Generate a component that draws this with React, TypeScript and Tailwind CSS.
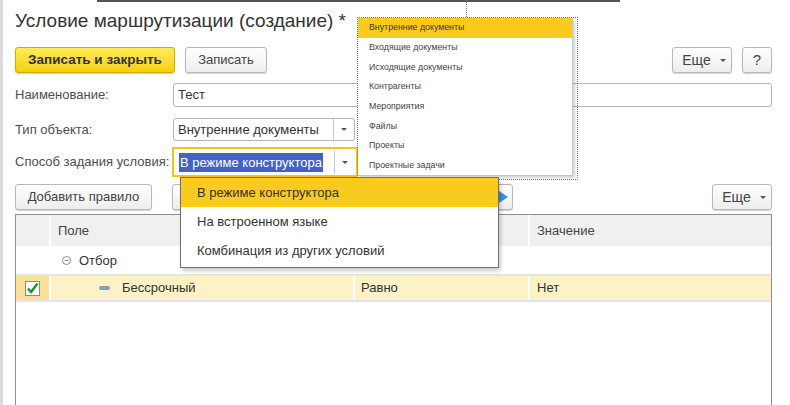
const Caret = () => (
  <span className="inline-block w-0 h-0 border-l-[3px] border-r-[3px] border-t-[3px] border-l-transparent border-r-transparent border-t-[#555]" />
);

type BtnProps = { children?: React.ReactNode; className?: string };

const Btn = ({ children, className = '' }: BtnProps) => (
  <div
    className={`flex items-center justify-center rounded-[3px] border border-[#b8b8b8] bg-linear-to-b from-white to-[#ededed] shadow-[0_1px_1px_rgba(0,0,0,0.18)] text-[13px] text-[#444] ${className}`.trim()}
  >
    {children}
  </div>
);

const objectTypes = [
  'Внутренние документы',
  'Входящие документы',
  'Исходящие документы',
  'Контрагенты',
  'Мероприятия',
  'Файлы',
  'Проекты',
  'Проектные задачи',
];

const modes = ['В режиме конструктора', 'На встроенном языке', 'Комбинация из других условий'];

export default function App() {
  return (
    <div className="relative w-[790px] h-[405px] overflow-hidden bg-white flex [font-family:'Liberation_Sans',Arial,sans-serif]">
      {/* left window edge */}
      <div className="w-[3px] h-full bg-[#dadada] shrink-0" />

      <div className="flex-1 flex flex-col pl-[12px] pr-[18px]">
        {/* Title */}
        <h1 className="mt-[9px] text-[19px] leading-[24px] text-[#333] font-normal">
          Условие маршрутизации (создание) *
        </h1>

        {/* Command bar */}
        <div className="mt-[14px] flex items-center h-[26px]">
          <div className="flex items-center justify-center w-[160px] h-[26px] rounded-[3px] border border-[#cfae00] bg-linear-to-b from-[#ffec55] to-[#f4cf00] shadow-[0_1px_1px_rgba(0,0,0,0.2)] text-[13.5px] font-bold text-[#333]">
            Записать и закрыть
          </div>
          <Btn className="ml-[10px] w-[82px] h-[26px]">Записать</Btn>
          <Btn className="ml-auto w-[60px] h-[26px] gap-[9px] pl-[4px] text-[14px]">
            Еще <Caret />
          </Btn>
          <Btn className="ml-[10px] w-[30px] h-[26px] text-[15px] text-[#333]">?</Btn>
        </div>

        {/* Наименование */}
        <div className="mt-[10px] flex items-center h-[24px] text-[13px]">
          <div className="w-[158px] text-[#4d4d4d] whitespace-nowrap">Наименование:</div>
          <div className="flex-1 h-[24px] rounded-[3px] border border-[#b5b5b5] flex items-center px-[4px] text-[#333]">
            Тест
          </div>
        </div>

        {/* Тип объекта */}
        <div className="mt-[11px] flex items-center h-[23px] text-[13px]">
          <div className="w-[158px] text-[#4d4d4d] whitespace-nowrap">Тип объекта:</div>
          <div className="w-[182px] h-[23px] rounded-[3px] border border-[#b5b5b5] flex items-center text-[#333]">
            <div className="flex-1 px-[4px] whitespace-nowrap">Внутренние документы</div>
            <div className="w-[21px] h-full border-l border-[#c8c8c8] flex items-center justify-center">
              <Caret />
            </div>
          </div>
        </div>

        {/* Способ задания условия */}
        <div className="mt-[6px] flex items-center h-[30px] text-[13px]">
          <div className="w-[157px] text-[#4d4d4d] whitespace-nowrap">Способ задания условия:</div>
          <div className="w-[186px] h-[30px] border-2 border-[#f5c21b] flex items-center p-[1px]">
            <div className="flex-1 h-full flex items-center pl-[4px] whitespace-nowrap">
              <span className="bg-[#4461c6] text-white leading-[19px] px-[1px]">В режиме конструктора</span>
            </div>
            <div className="w-[21px] h-full border-l border-[#c8c8c8] flex items-center justify-center">
              <Caret />
            </div>
          </div>
        </div>

        {/* Table command bar */}
        <div className="mt-[7px] flex items-center h-[26px]">
          <Btn className="w-[137px] h-[26px]">Добавить правило</Btn>
          <Btn className="ml-[20px] w-[341px] h-[26px] justify-end pr-[3px]">
            <svg width="12" height="14" viewBox="0 0 12 14">
              <path d="M2 1 L11 7 L2 13 Z" fill="#3d8fd6" />
            </svg>
          </Btn>
          <Btn className="ml-auto w-[60px] h-[26px] gap-[9px] pl-[4px] text-[14px]">
            Еще <Caret />
          </Btn>
        </div>

        {/* Table */}
        <div className="mt-[4px] flex-1 border border-b-0 border-[#8f8f8f] bg-white text-[13px] text-[#333]">
          <div className="grid grid-cols-[33px_302px_173px_1fr] gap-x-[2px] h-[31px]">
            <div className="bg-[#f0f0f0]" />
            <div className="bg-[#f0f0f0] flex items-center pl-[7px] text-[#444]">Поле</div>
            <div className="bg-[#f0f0f0] flex items-center pl-[7px] text-[#444]">Вид сравнения</div>
            <div className="bg-[#f0f0f0] flex items-center pl-[7px] text-[#444]">Значение</div>
          </div>

          <div className="mt-[1px] h-[29px] flex items-center border-b-2 border-[#e4e4e4]">
            <div className="w-[46px]" />
            <svg width="9" height="9" viewBox="0 0 9 9" className="mr-[8px]">
              <circle cx="4.5" cy="4.5" r="4" fill="none" stroke="#8a8a8a" />
              <path d="M2.5 4.5 H6.5" stroke="#8a8a8a" />
            </svg>
            <span>Отбор</span>
          </div>

          <div className="grid grid-cols-[33px_302px_173px_1fr] gap-x-[2px] h-[26px] border-b-2 border-[#e4e4e4]">
            <div className="bg-[#fbe197] flex items-center pl-[9px]">
              <div className="w-[15px] h-[15px] border border-[#8a8a8a] bg-white flex items-center justify-center">
                <svg width="13" height="13" viewBox="0 0 13 13">
                  <path d="M2 6.5 L5 10 L11.5 1.5" fill="none" stroke="#15953a" strokeWidth="2.4" />
                </svg>
              </div>
            </div>
            <div className="bg-[#fdf1c6] flex items-center pl-[48px]">
              <div className="w-[11px] h-[4px] rounded-[2px] bg-[#7f9fc2] mr-[12px]" />
              <span>Бессрочный</span>
            </div>
            <div className="bg-[#fdf1c6] flex items-center pl-[6px]">Равно</div>
            <div className="bg-[#fdf1c6] flex items-center pl-[7px]">Нет</div>
          </div>
        </div>
      </div>

      {/* window frame artifacts */}
      <div className="absolute left-[97px] top-0 w-[523px] h-[2px] bg-[#555]" />
      <div className="absolute left-[466px] top-0 h-[17px] border-l border-dotted border-[#777]" />

      {/* Object type list popup */}
      <div className="absolute left-[357px] top-[17px] w-[221px] h-[163px] border border-dotted border-[#777]">
        <div className="w-[215px] h-[158px] bg-white border-r border-b border-[#c4c4c4] shadow-[2px_2px_3px_rgba(0,0,0,0.18)] text-[8.8px] text-[#444]">
          {objectTypes.map((t, i) => (
            <div
              key={t}
              className={`h-[19.7px] flex items-center pl-[11px] ${i === 0 ? 'bg-[#f9cb1f] text-[#3a3a3a]' : ''}`}
            >
              {t}
            </div>
          ))}
        </div>
      </div>

      {/* Mode list popup */}
      <div className="absolute left-[180px] top-[177px] w-[319px] h-[91px] border border-[#6f6f6f] bg-white shadow-[2px_3px_4px_rgba(0,0,0,0.2)] text-[13px] text-[#333]">
        {modes.map((m, i) => (
          <div
            key={m}
            className={`h-[29.3px] flex items-center pl-[16px] ${i === 0 ? 'bg-[#f9cb1f]' : ''}`}
          >
            {m}
          </div>
        ))}
      </div>
    </div>
  );
}
